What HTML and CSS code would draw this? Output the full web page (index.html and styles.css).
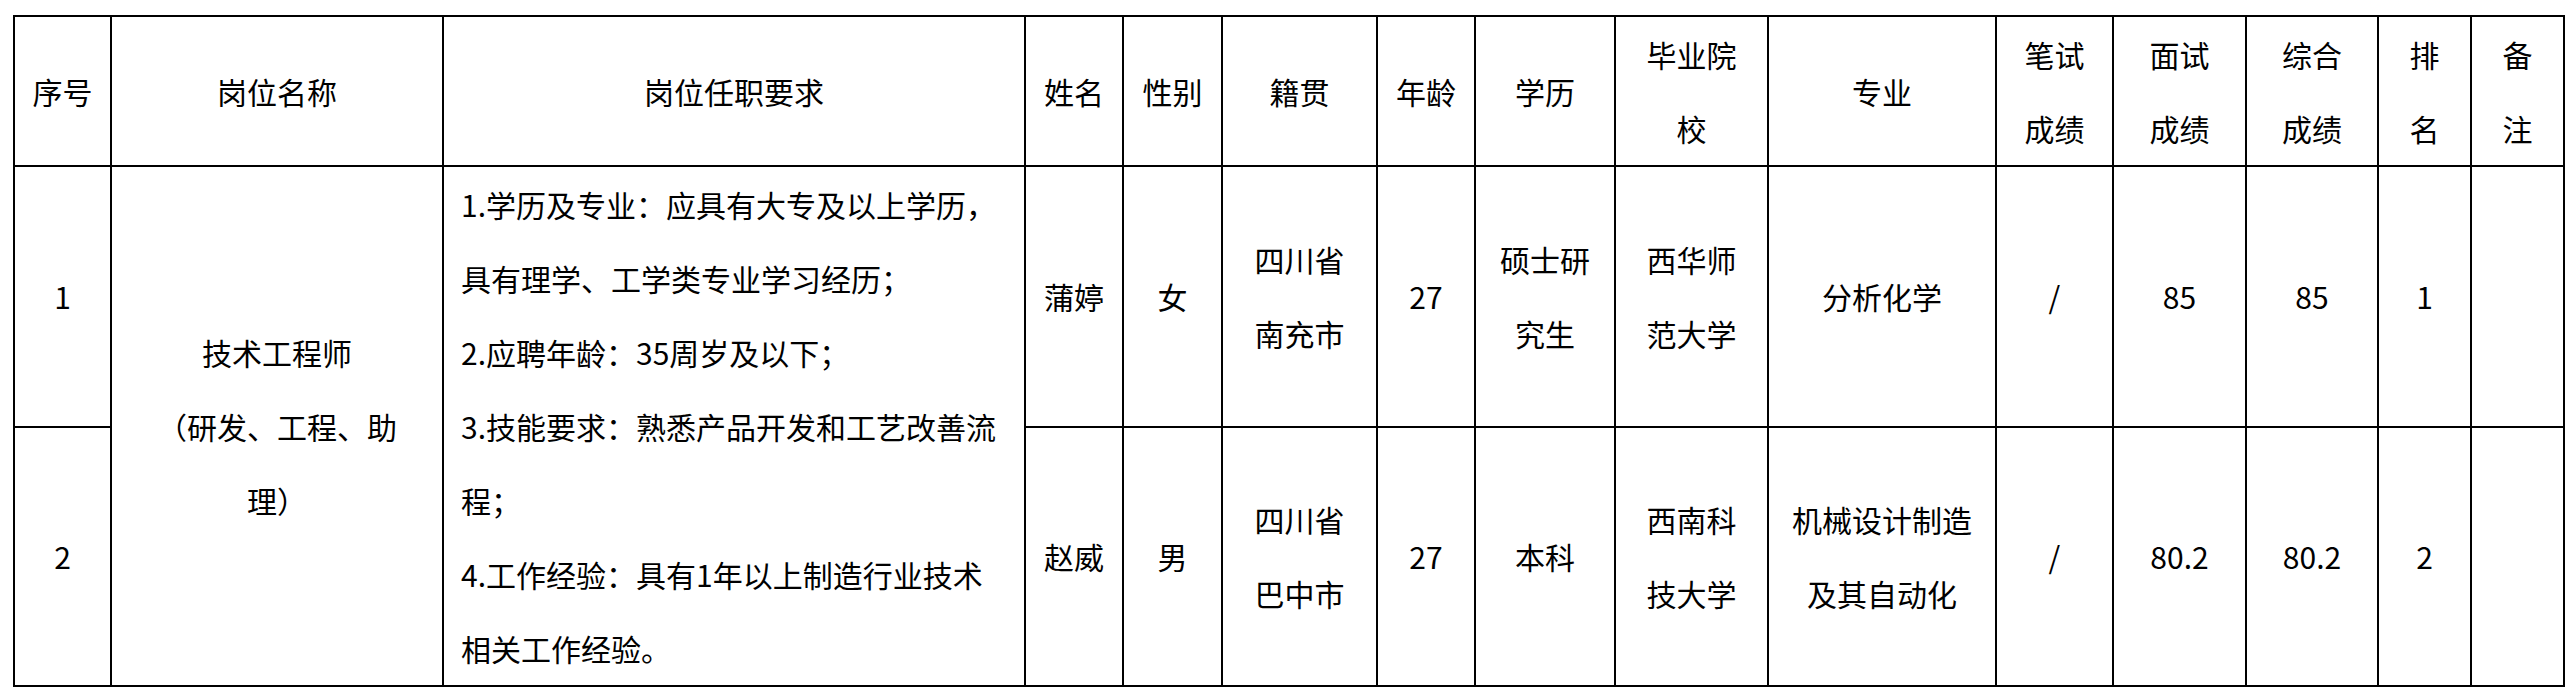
FILE: index.html
```html
<!DOCTYPE html>
<html lang="zh-CN">
<head>
<meta charset="utf-8">
<title>拟聘用人员名单</title>
<link rel="stylesheet" href="styles.css">
</head>
<body>
<table class="roster">
  <colgroup>
    <col class="c-no">
    <col class="c-post">
    <col class="c-req">
    <col class="c-name">
    <col class="c-sex">
    <col class="c-origin">
    <col class="c-age">
    <col class="c-edu">
    <col class="c-school">
    <col class="c-major">
    <col class="c-written">
    <col class="c-interview">
    <col class="c-total">
    <col class="c-rank">
    <col class="c-note">
  </colgroup>
  <thead>
    <tr class="r-head">
      <th>序号</th>
      <th>岗位名称</th>
      <th>岗位任职要求</th>
      <th>姓名</th>
      <th>性别</th>
      <th>籍贯</th>
      <th>年龄</th>
      <th>学历</th>
      <th>毕业院<br>校</th>
      <th>专业</th>
      <th>笔试<br>成绩</th>
      <th>面试<br>成绩</th>
      <th>综合<br>成绩</th>
      <th>排<br>名</th>
      <th>备<br>注</th>
    </tr>
  </thead>
  <tbody>
    <tr class="r-1">
      <td>1</td>
      <td rowspan="2" class="post">技术工程师<br>（研发、工程、助理）</td>
      <td rowspan="2" class="req">
        <p>1.学历及专业：应具有大专及以上学历，具有理学、工学类专业学习经历；</p>
        <p>2.应聘年龄：35周岁及以下；</p>
        <p>3.技能要求：熟悉产品开发和工艺改善流程；</p>
        <p>4.工作经验：具有1年以上制造行业技术相关工作经验。</p>
      </td>
      <td>蒲婷</td>
      <td>女</td>
      <td>四川省<br>南充市</td>
      <td>27</td>
      <td>硕士研<br>究生</td>
      <td>西华师<br>范大学</td>
      <td>分析化学</td>
      <td>/</td>
      <td>85</td>
      <td>85</td>
      <td>1</td>
      <td></td>
    </tr>
    <tr class="r-2">
      <td>2</td>
      <td>赵威</td>
      <td>男</td>
      <td>四川省<br>巴中市</td>
      <td>27</td>
      <td>本科</td>
      <td>西南科<br>技大学</td>
      <td>机械设计制造<br>及其自动化</td>
      <td>/</td>
      <td>80.2</td>
      <td>80.2</td>
      <td>2</td>
      <td></td>
    </tr>
  </tbody>
</table>
</body>
</html>
```
FILE: styles.css
```css
html, body {
  margin: 0;
  padding: 0;
  background: #ffffff;
}

body {
  font-family: "Noto Sans CJK SC", "Noto Sans", sans-serif;
  font-size: 30px;
  color: #000000;
}

.roster {
  border-collapse: collapse;
  table-layout: fixed;
  width: 2552px;
  margin: 15px 0 0 13px;
}

.roster th,
.roster td {
  border: 2px solid #000000;
  padding: 0 4px;
  text-align: center;
  vertical-align: middle;
  font-weight: normal;
  line-height: 74px;
  white-space: nowrap;
}

.c-no { width: 97px; }
.c-post { width: 332px; }
.c-req { width: 582px; }
.c-name { width: 98px; }
.c-sex { width: 99px; }
.c-origin { width: 155px; }
.c-age { width: 98px; }
.c-edu { width: 140px; }
.c-school { width: 153px; }
.c-major { width: 228px; }
.c-written { width: 117px; }
.c-interview { width: 133px; }
.c-total { width: 132px; }
.c-rank { width: 93px; }
.c-note { width: 93px; }

.r-head { height: 149px; }
.r-1 { height: 260px; }
.r-2 { height: 259px; }

.roster td.post {
  white-space: normal;
  padding: 0 39px;
}

.roster td.req {
  white-space: normal;
  text-align: left;
  padding: 0 17px;
}

.req p {
  margin: 0;
}
```
